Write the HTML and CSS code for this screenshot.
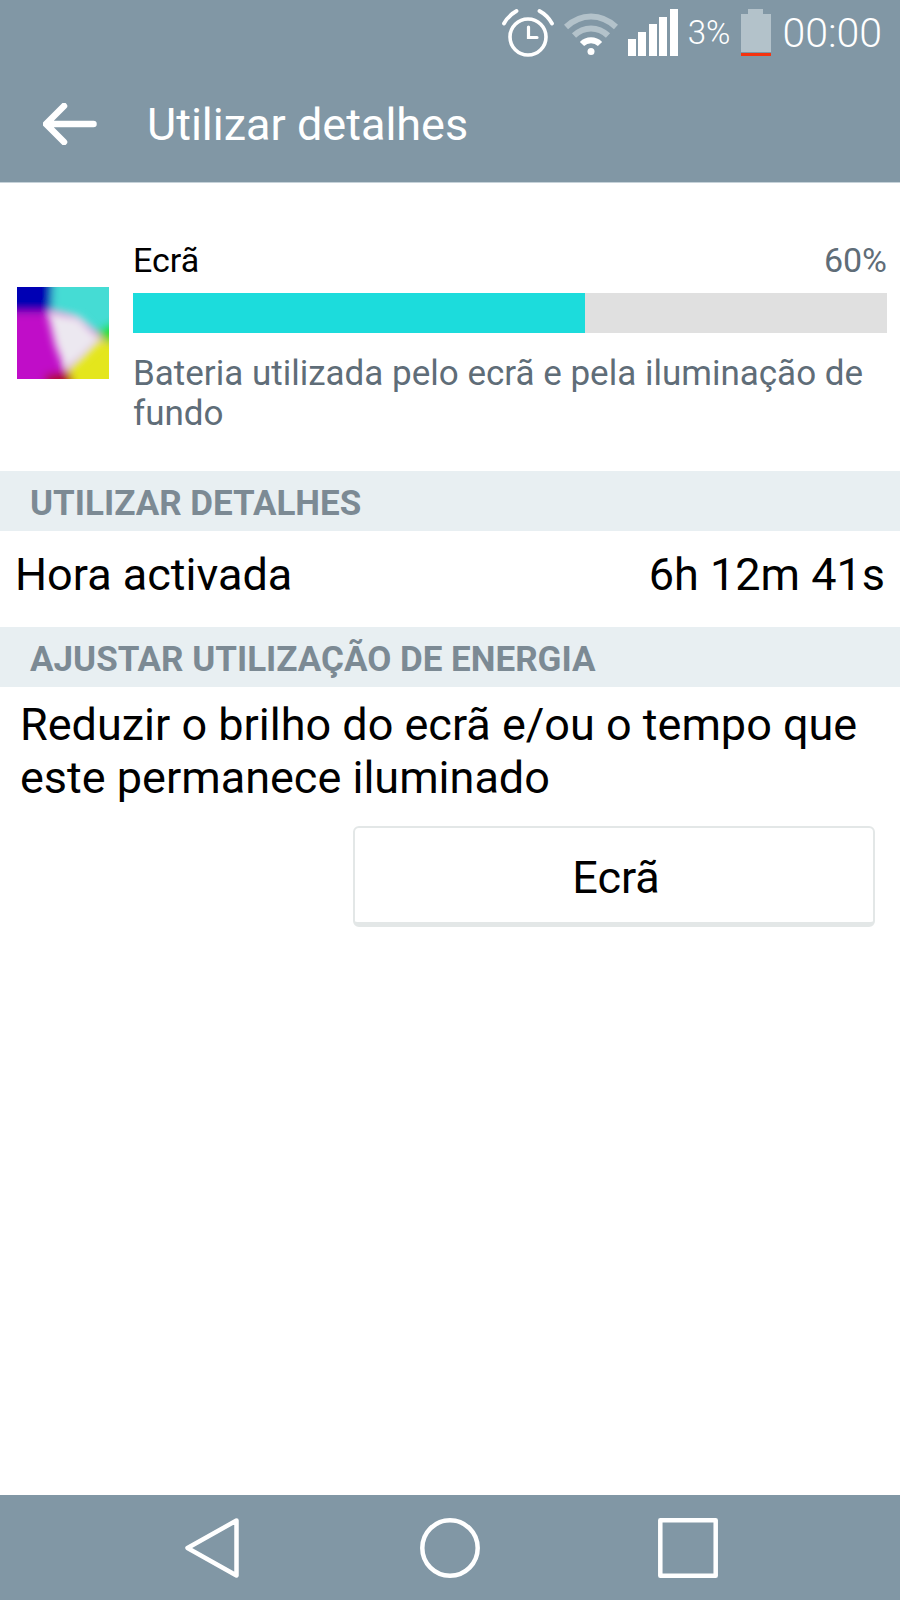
FILE: index.html
```html
<!DOCTYPE html>
<html lang="pt">
<head>
<meta charset="utf-8">
<title>Utilizar detalhes</title>
<link rel="stylesheet" href="styles.css">
</head>
<body>
<div class="screen">
  <header class="appbar">
    <div class="status">
      <svg class="ic-alarm" viewBox="0 0 52 48" width="52" height="48">
        <g fill="none" stroke="#fff" stroke-linecap="round">
          <circle cx="26" cy="28" r="18" stroke-width="3.6"/>
          <path d="M26.500 18v10.500H35" stroke-width="3.2"/>
          <path d="M2 14.500C5 9 9 5 14.500 2M50 14.500C47 9 43 5 37.500 2" stroke-width="3.800"/>
        </g>
      </svg>
      <svg class="ic-wifi" viewBox="0 0 54 42" width="54" height="42">
        <g fill="none" stroke-width="6">
          <path d="M2 14C17 0 37 0 52 14" stroke="#b3c2ca"/>
          <path d="M10 22.500C20 13 34 13 44 22.500" stroke="#b3c2ca"/>
          <path d="M18 31C23 26 31 26 36 31" stroke="#fff"/>
        </g>
        <circle cx="27" cy="38.500" r="3.500" fill="#fff"/>
      </svg>
      <div class="signal"><i class="s1"></i><i class="s2"></i><i class="s3"></i><i class="s4"></i><i class="s5"></i></div>
      <span class="pct">3%</span>
      <svg class="ic-batt" viewBox="0 0 30 47" width="30" height="47">
        <path d="M7 0h15v5h8v38H0V5h7z" fill="#b3c2ca"/>
        <rect y="44" width="30" height="3" fill="#f5330f"/>
      </svg>
      <span class="clock">00:00</span>
    </div>
    <div class="titlebar">
      <svg class="ic-back" viewBox="0 0 54 42" width="54" height="42">
        <path d="M50.500 21H4M21 3L3 21l18 18" fill="none" stroke="#fff" stroke-width="6.500" stroke-linecap="round" stroke-linejoin="round"/>
      </svg>
      <h1 class="title">Utilizar detalhes</h1>
    </div>
  </header>

  <main class="content">
    <section class="usage">
      <svg class="thumb" viewBox="0 0 92 92" width="92" height="92">
        <defs>
          <filter id="soft" x="-20%" y="-20%" width="140%" height="140%"><feGaussianBlur stdDeviation="4.500"/></filter>
          <filter id="softer" x="-30%" y="-30%" width="160%" height="160%"><feGaussianBlur stdDeviation="4"/></filter>
          <clipPath id="box"><rect width="92" height="92"/></clipPath>
        </defs>
        <g clip-path="url(#box)">
          <g filter="url(#soft)">
            <rect x="-15" y="-15" width="122" height="122" fill="#c010c8"/>
            <polygon points="-15,-15 36,-15 34,25 -15,25" fill="#0400b4"/>
            <polygon points="36,-15 107,-15 107,36 78,46 55,30 34,24" fill="#44dcd4"/>
            <polygon points="107,30 107,62 84,50 80,44" fill="#20e020"/>
            <polygon points="78,50 107,60 107,107 58,107 50,80" fill="#e4e61c"/>
            <polygon points="28,88 52,84 60,107 28,107" fill="#b01018"/>
          </g>
          <g filter="url(#softer)">
            <polygon points="30,24 62,30 84,52 64,72 48,84 38,58" fill="#ece8f0"/>
          </g>
        </g>
      </svg>
      <div class="usage-body">
        <div class="usage-head"><span class="usage-name">Ecrã</span><span class="usage-pct">60%</span></div>
        <div class="bar"><div class="bar-fill" style="width:60%"></div></div>
        <p class="usage-desc">Bateria utilizada pelo ecrã e pela iluminação de fundo</p>
      </div>
    </section>

    <h2 class="section-head">UTILIZAR DETALHES</h2>
    <div class="row"><span>Hora activada</span><span>6h 12m 41s</span></div>

    <h2 class="section-head">AJUSTAR UTILIZAÇÃO DE ENERGIA</h2>
    <p class="advice">Reduzir o brilho do ecrã e/ou o tempo que este permanece iluminado</p>
    <div class="actions"><button class="btn" type="button">Ecrã</button></div>
  </main>

  <nav class="navbar">
    <svg class="nav-back" viewBox="0 0 54 60" width="54" height="60"><path d="M51.500 2.500L2.500 30l49 27.500z" fill="none" stroke="#fff" stroke-width="4.500" stroke-linejoin="round"/></svg>
    <svg class="nav-home" viewBox="0 0 60 60" width="60" height="60"><circle cx="30" cy="30" r="27.700" fill="none" stroke="#fff" stroke-width="4.500"/></svg>
    <svg viewBox="0 0 60 60" width="60" height="60"><rect x="2.300" y="2.300" width="55.400" height="55.400" fill="none" stroke="#fff" stroke-width="4.500" stroke-linejoin="round"/></svg>
  </nav>
</div>
</body>
</html>
```
FILE: styles.css
```css
* { box-sizing: border-box; }
html, body { margin: 0; padding: 0; }
body { font-family: Roboto, "Liberation Sans", sans-serif; background: #fff; color: #000; }
.screen { width: 900px; height: 1600px; display: flex; flex-direction: column; overflow: hidden; }

.appbar { height: 183px; flex: none; background: #8197a5; border-bottom: 1px solid #c6d2d9; display: flex; flex-direction: column; color: #fff; }
.status { height: 65px; display: flex; align-items: center; justify-content: flex-end; padding: 0 18px 0 0; }
.ic-alarm { margin-right: 10px; }
.ic-wifi { margin-right: 10px; margin-top: 3px; }
.signal { display: flex; align-items: flex-end; gap: 2.500px; height: 47px; margin-right: 10px; }
.signal i { display: block; width: 8px; background: #fff; }
.signal .s1 { height: 17px; }
.signal .s2 { height: 24px; }
.signal .s3 { height: 32px; }
.signal .s4 { height: 39px; }
.signal .s5 { height: 47px; }
.pct { font-size: 33px; font-weight: 300; margin-right: 11px; }
.ic-batt { margin-right: 11px; }
.clock { font-size: 41px; font-weight: 300; }

.titlebar { flex: 1; display: flex; align-items: center; padding: 0 0 0 43px; }
.ic-back { flex: none; margin-right: 50px; }
.title { margin: 0; padding-top: 2px; font-size: 45px; font-weight: 400; line-height: 1; }

.content { flex: 1; display: flex; flex-direction: column; }
.usage { height: 288px; flex: none; display: flex; align-items: flex-start; padding: 59px 13px 0 17px; }
.thumb { flex: none; margin: 45px 24px 0 0; }
.usage-body { flex: 1; min-width: 0; }
.usage-head { display: flex; justify-content: space-between; align-items: baseline; font-size: 34px; line-height: 36px; }
.usage-name { color: #000; }
.usage-pct { color: #5f6d78; }
.bar { height: 40px; background: #e0e0e0; margin-top: 15px; }
.bar-fill { height: 100%; background: #1cdcdc; }
.usage-desc { margin: 21px 0 0; font-size: 35px; line-height: 40px; color: #5f6d78; }

.section-head { margin: 0; height: 60px; flex: none; padding: 3px 0 0 30px; background: #e8eff2; color: #7c8a94; font-size: 35px; font-weight: 700; line-height: 60px; }
.row { height: 96px; flex: none; display: flex; align-items: center; justify-content: space-between; padding: 0 15px 10px 15px; font-size: 45px; }
.advice { margin: 11px 0 0; padding: 0 30px 0 20px; font-size: 45px; line-height: 53px; }
.actions { display: flex; justify-content: flex-end; padding: 22px 25px 0 0; }
.btn { width: 522px; height: 101px; padding: 5px 0 0 4px; background: #fff; border: 2px solid #e3e7e7; border-bottom-width: 5px; border-radius: 6px; font: 400 45px Roboto, "Liberation Sans", sans-serif; color: #000; }

.navbar { height: 105px; flex: none; background: #8197a5; display: flex; align-items: center; padding-left: 185px; }
.nav-back { margin-right: 181px; }
.nav-home { margin-right: 178px; }
```
